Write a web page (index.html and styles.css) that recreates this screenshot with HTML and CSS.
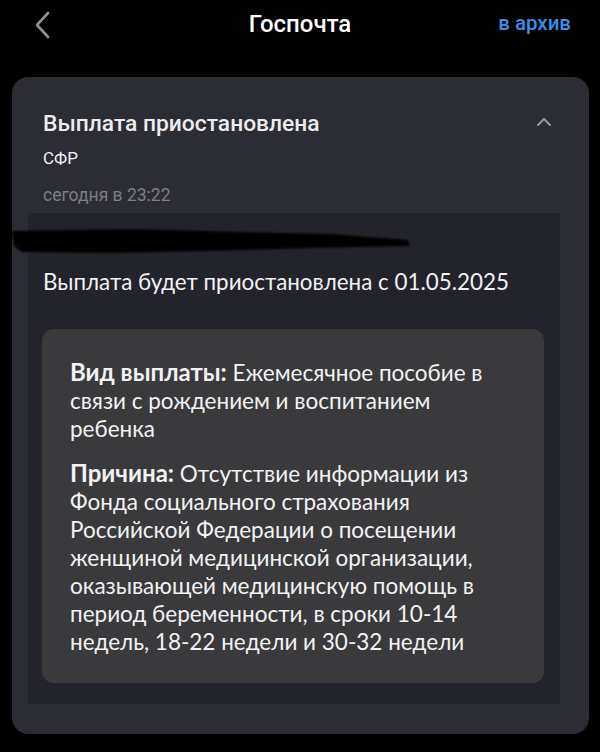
FILE: index.html
```html
<!DOCTYPE html>
<html lang="ru">
<head>
<meta charset="utf-8">
<link rel="stylesheet" href="styles.css">
</head>
<body>
<div class="topbar">
  <svg class="back" width="20" height="30" viewBox="0 0 20 30"><path d="M15 3 L4 15 L15 27" fill="none" stroke="#8e8e93" stroke-width="2.6" stroke-linecap="round" stroke-linejoin="round"/></svg>
  <div class="title">Госпочта</div>
  <div class="archive">в архив</div>
</div>
<div class="card">
  <div class="card-head">
    <div class="head-row">
      <div class="subject">Выплата приостановлена</div>
      <svg class="chev" width="16" height="10" viewBox="0 0 16 10"><path d="M2 8 L8 2 L14 8" fill="none" stroke="#9a9aa2" stroke-width="2" stroke-linecap="round" stroke-linejoin="round"/></svg>
    </div>
    <div class="sender">СФР</div>
    <div class="date">сегодня в 23:22</div>
  </div>
  <div class="content">
    <svg class="redact" width="420" height="40" viewBox="0 0 420 40"><defs><filter id="b"><feGaussianBlur stdDeviation="1.2"/></filter></defs><path filter="url(#b)" d="M2 13 L120 11 L230 14 L320 16 L398 22 L400 28 L300 30 L200 33 L100 35 L12 34 L4 28 Z" fill="#000"/></svg>
    <p class="lead">Выплата будет приостановлена с 01.05.2025</p>
    <div class="box">
      <p><b>Вид выплаты:</b> Ежемесячное пособие в связи с рождением и воспитанием ребенка</p>
      <p><b>Причина:</b> Отсутствие информации из Фонда социального страхования Российской Федерации о посещении женщиной медицинской организации, оказывающей медицинскую помощь в период беременности, в сроки 10-14 недель, 18-22 недели и 30-32 недели</p>
    </div>
  </div>
</div>
</body>
</html>
```
FILE: styles.css
```css
html, body { margin: 0; padding: 0; background: #000; }
body { width: 600px; height: 752px; overflow: hidden; font-family: Roboto, "Noto Sans", sans-serif; color: #f0f0f2; }
.topbar { position: relative; height: 77px; }
.back { position: absolute; left: 33px; top: 10px; }
.title { position: absolute; left: 0; right: 0; top: 10px; text-align: center; font-size: 24px; font-weight: 500; color: #fff; }
.archive { position: absolute; right: 29px; top: 11px; font-size: 20.5px; font-weight: 500; color: #3a8fe8; }
.card { margin: 0 11px 0 12px; background: #2b2c34; border-radius: 16px; padding: 0 29px 30px 16px; }
.card-head { padding: 33px 0 7px 15px; }
.head-row { display: flex; justify-content: space-between; align-items: center; }
.subject { font-size: 22.8px; line-height: 28px; font-weight: 500; color: #ececee; }
.chev { margin-right: 8px; margin-top: -4px; }
.sender { font-size: 17px; line-height: 22px; margin-top: 9px; color: #f2f2f4; }
.date { font-size: 17.5px; line-height: 22px; margin-top: 15px; color: #7d7e86; }
.content { position: relative; background: #23242b; padding: 55px 16px 21px 14px; font-family: Lato, "Noto Sans", sans-serif; }
.redact { position: absolute; left: -18px; top: 5px; }
.lead { margin: 0 0 33px 1px; font-size: 22.4px; line-height: 28px; color: #f2f2f4; }
.box { background: #3a3a3c; border-radius: 12px; padding: 29px 24px 27px 28px; }
.box p { margin: 0; font-size: 22.5px; line-height: 28px; color: #f2f2f4; }
.box p + p { margin-top: 16px; }
.box b { font-weight: 700; font-size: 24px; }
```
